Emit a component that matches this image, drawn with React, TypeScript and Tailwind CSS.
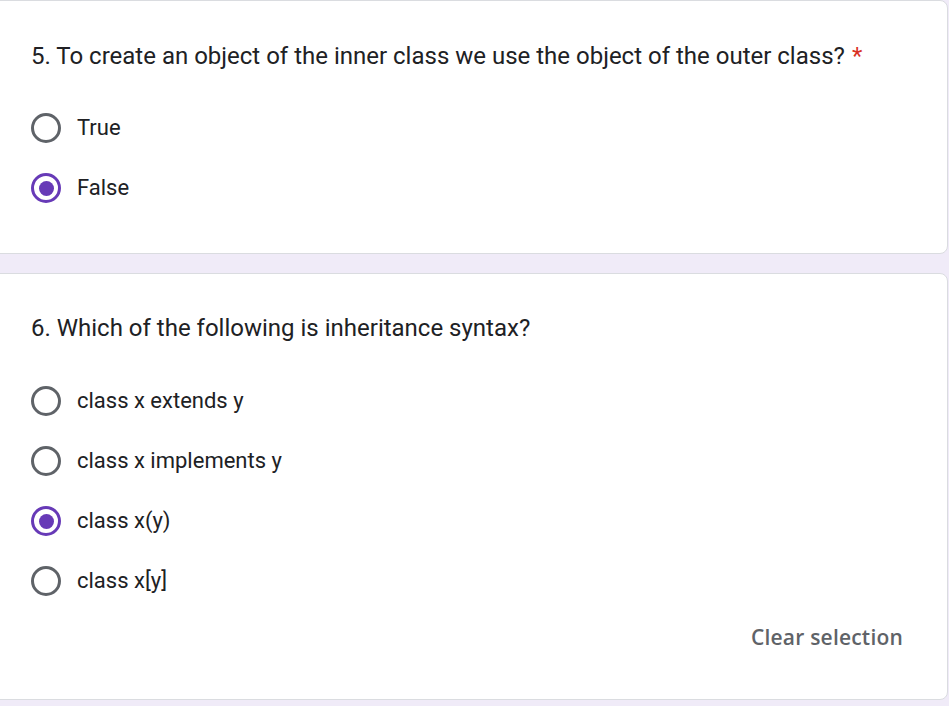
import React from "react";

const Radio = ({ checked }: { checked?: boolean }) =>
  checked ? (
    <div className="flex h-[30px] w-[30px] shrink-0 items-center justify-center rounded-full border-[3px] border-[#673ab7]">
      <div className="h-[15px] w-[15px] rounded-full bg-[#673ab7]" />
    </div>
  ) : (
    <div className="h-[30px] w-[30px] shrink-0 rounded-full border-[3px] border-[#5f6368]" />
  );

const Option = ({ label, checked }: { label: string; checked?: boolean }) => (
  <div className="flex h-[60px] items-center">
    <Radio checked={checked} />
    <span className="ml-[16px] text-[22px] leading-[30px] text-[#202124]">{label}</span>
  </div>
);

export default function App() {
  return (
    <div
      className="min-h-[706px] w-[949px] overflow-hidden bg-[#f0ebf8]"
      style={{ fontFamily: "Roboto, 'Liberation Sans', sans-serif" }}
    >
      <div className="ml-[-8px] mr-px rounded-lg border border-[#dadce0] bg-white pb-[35px] pl-[38px] pt-[37px]">
        <div className="text-[24px] leading-[36px] text-[#202124]">
          5. To create an object of the inner class we use the object of the outer class?
          <span className="ml-[7px] text-[#d93025]">*</span>
        </div>
        <div className="mt-[24px] flex flex-col">
          <Option label="True" />
          <Option label="False" checked />
        </div>
      </div>
      <div className="ml-[-8px] mr-px mt-[19px] rounded-lg border border-[#dadce0] bg-white pb-[47px] pl-[38px] pr-[44px] pt-[36px]">
        <div className="text-[24px] leading-[36px] text-[#202124]">
          6. Which of the following is inheritance syntax?
        </div>
        <div className="mt-[25px] flex flex-col">
          <Option label="class x extends y" />
          <Option label="class x implements y" />
          <Option label="class x(y)" checked />
          <Option label="class x[y]" />
        </div>
        <div className="mt-[11px] flex justify-end">
          <span
            className="text-[21px] font-semibold leading-[30px] tracking-[0.2px] text-[#5f6368]"
            style={{ fontFamily: "'Open Sans', Roboto, sans-serif" }}
          >
            Clear selection
          </span>
        </div>
      </div>
    </div>
  );
}
